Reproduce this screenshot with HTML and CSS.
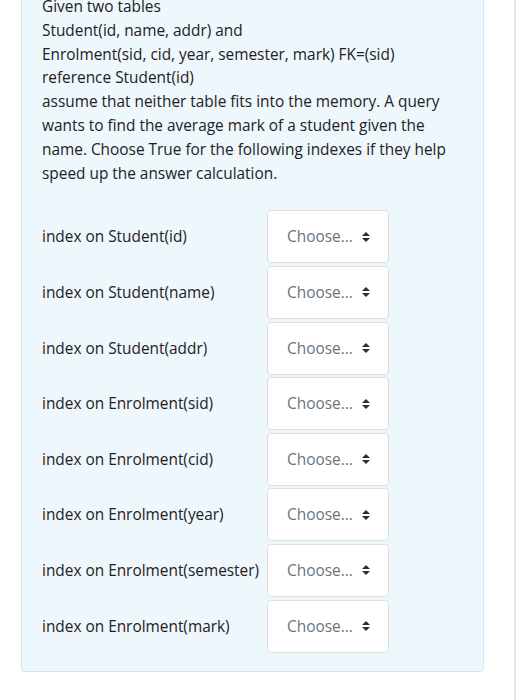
FILE: index.html
```html
<!DOCTYPE html>
<html>
<head>
<meta charset="utf-8">
<link rel="stylesheet" href="styles.css">
</head>
<body>
<div class="page">
  <div class="panel">
    <div class="qtext">
      Given two tables<br>
      Student(id, name, addr) and<br>
      Enrolment(sid, cid, year, semester, mark) FK=(sid)<br>
      reference Student(id)<br>
      assume that neither table fits into the memory. A query wants to find the average mark of a student given the name. Choose True for the following indexes if they help speed up the answer calculation.
    </div>
    <div class="answers">
      <div class="row"><div class="label">index on Student(id)</div><div class="select"><span>Choose...</span><svg class="arr" width="8" height="10" viewBox="0 0 8 10"><path d="M4 0 L8 4 H0 Z M0 6 H8 L4 10 Z" fill="#2b2f33"/></svg></div></div>
      <div class="row"><div class="label">index on Student(name)</div><div class="select"><span>Choose...</span><svg class="arr" width="8" height="10" viewBox="0 0 8 10"><path d="M4 0 L8 4 H0 Z M0 6 H8 L4 10 Z" fill="#2b2f33"/></svg></div></div>
      <div class="row"><div class="label">index on Student(addr)</div><div class="select"><span>Choose...</span><svg class="arr" width="8" height="10" viewBox="0 0 8 10"><path d="M4 0 L8 4 H0 Z M0 6 H8 L4 10 Z" fill="#2b2f33"/></svg></div></div>
      <div class="row"><div class="label">index on Enrolment(sid)</div><div class="select"><span>Choose...</span><svg class="arr" width="8" height="10" viewBox="0 0 8 10"><path d="M4 0 L8 4 H0 Z M0 6 H8 L4 10 Z" fill="#2b2f33"/></svg></div></div>
      <div class="row"><div class="label">index on Enrolment(cid)</div><div class="select"><span>Choose...</span><svg class="arr" width="8" height="10" viewBox="0 0 8 10"><path d="M4 0 L8 4 H0 Z M0 6 H8 L4 10 Z" fill="#2b2f33"/></svg></div></div>
      <div class="row"><div class="label">index on Enrolment(year)</div><div class="select"><span>Choose...</span><svg class="arr" width="8" height="10" viewBox="0 0 8 10"><path d="M4 0 L8 4 H0 Z M0 6 H8 L4 10 Z" fill="#2b2f33"/></svg></div></div>
      <div class="row"><div class="label">index on Enrolment(semester)</div><div class="select"><span>Choose...</span><svg class="arr" width="8" height="10" viewBox="0 0 8 10"><path d="M4 0 L8 4 H0 Z M0 6 H8 L4 10 Z" fill="#2b2f33"/></svg></div></div>
      <div class="row"><div class="label">index on Enrolment(mark)</div><div class="select"><span>Choose...</span><svg class="arr" width="8" height="10" viewBox="0 0 8 10"><path d="M4 0 L8 4 H0 Z M0 6 H8 L4 10 Z" fill="#2b2f33"/></svg></div></div>
    </div>
  </div>
</div>
</body>
</html>
```
FILE: styles.css
```css
html, body {
  margin: 0;
  padding: 0;
  background: #ffffff;
}
body {
  font-family: "Open Sans", "Noto Sans", sans-serif;
  font-size: 15.4px;
  color: #1d2125;
}
.page {
  width: 516px;
  min-height: 700px;
  box-sizing: border-box;
  border-right: 2px solid #e3e3ea;
  padding-left: 21px;
  overflow: hidden;
}
.panel {
  width: 463px;
  box-sizing: border-box;
  margin-top: -8px;
  padding: 2px 20px 18px 20px;
  background: #eef7fb;
  border: 1px solid #d4e6ee;
  border-radius: 4px;
}
.qtext {
  line-height: 23.8px;
}
.answers {
  margin-top: 25px;
  display: flex;
  flex-direction: column;
  gap: 2.6px;
}
.row {
  display: flex;
  align-items: center;
}
.label {
  width: 225px;
  flex: none;
}
.select {
  width: 122px;
  height: 53px;
  box-sizing: border-box;
  background: #ffffff;
  border: 1px solid #dcdfe3;
  border-radius: 4px;
  display: flex;
  align-items: center;
  padding-left: 19px;
  color: #6a737b;
}
.select span {
  width: 75px;
}
.arr {
  display: block;
}
```
